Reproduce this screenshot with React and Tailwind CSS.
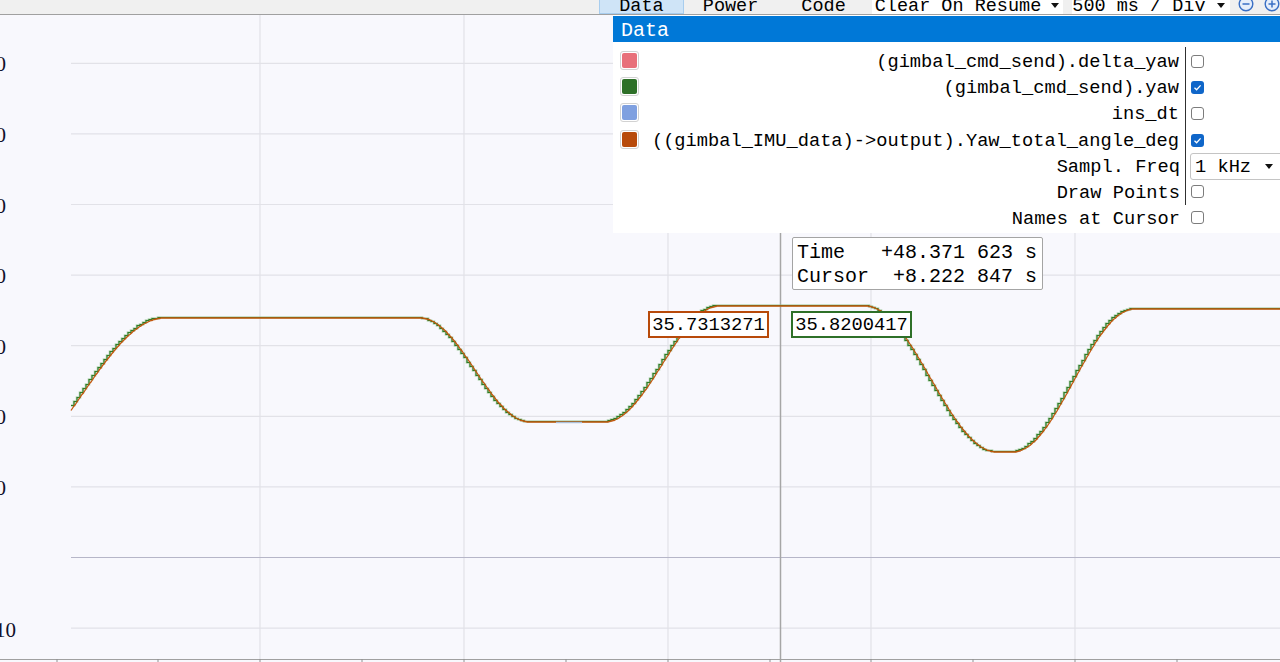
import { useMemo } from 'react'

const SEGS = [
  [0, 470, 165, 318],
  [420, 318, 530, 422],
  [605, 422, 720, 306],
  [865, 306, 997, 452],
  [1013, 452, 1135, 309],
]

function yaw(x) {
  let y = SEGS[0][1]
  for (const [x0, y0, x1, y1] of SEGS) {
    if (x < x0) return y
    if (x <= x1) {
      const t = (x - x0) / (x1 - x0)
      return y0 + ((y1 - y0) * (1 - Math.cos(Math.PI * t))) / 2
    }
    y = y1
  }
  return y
}

const GRID_Y = [63.3, 133.9, 204.5, 275.1, 345.7, 416.3, 486.9, 628.1]
const GRID_X = [260, 464, 668, 871, 1075]
const TICKS = [57, 158, 260, 362, 464, 566, 668, 770, 871, 973, 1075, 1177]

const rows = [
  { color: '#e8707a', label: '(gimbal_cmd_send).delta_yaw', checked: false },
  { color: '#2e7028', label: '(gimbal_cmd_send).yaw', checked: true },
  { color: '#7fa0e0', label: 'ins_dt', checked: false },
  { color: '#b84a0a', label: '((gimbal_IMU_data)->output).Yaw_total_angle_deg', checked: true },
]

function Checkbox({ checked }) {
  if (checked) {
    return (
      <span className="grid size-[13px] place-items-center rounded-[3px] bg-[#0f66c9]">
        <svg width="9" height="9" viewBox="0 0 9 9">
          <path d="M1.5 4.8 L3.6 6.8 L7.6 2.4" fill="none" stroke="white" strokeWidth="1.3" />
        </svg>
      </span>
    )
  }
  return <span className="block size-[13px] rounded-[3px] border border-[#7c7c7c] bg-white" />
}

function Caret() {
  return (
    <svg width="8" height="5" viewBox="0 0 8 5">
      <path d="M0 0 H8 L4 5 Z" fill="#111" />
    </svg>
  )
}

function ZoomIcon({ plus }) {
  return (
    <svg width="16" height="16" viewBox="0 0 16 16" className="-mt-[4px]">
      <circle cx="8" cy="8" r="6.8" fill="#e6eefa" stroke="#3a6fc4" strokeWidth="1.4" />
      <path d="M4.5 8 H11.5" stroke="#3a6fc4" strokeWidth="1.5" />
      {plus ? <path d="M8 4.5 V11.5" stroke="#3a6fc4" strokeWidth="1.5" /> : null}
    </svg>
  )
}

function Plot() {
  const orange = useMemo(() => {
    let d = `M71 ${yaw(71).toFixed(1)}`
    for (let x = 72; x <= 1280; x++) d += ` L${x} ${(Math.round(yaw(x) * 2) / 2).toFixed(1)}`
    return d
  }, [])

  // sampled channel: stair steps, a few pixels ahead of the angle
  const green = useMemo(() => {
    const g = (x) => Math.round(yaw(x + 3)) - 0.5
    let d = `M71 ${g(71)}`
    for (let x = 71; x < 1280; x += 3) d += ` H${x + 3} V${g(x + 3)}`
    return d
  }, [])

  return (
    <svg width="1280" height="647" className="block">
      <g transform="translate(0 -15)">
        {GRID_Y.map((y) => (
          <line key={y} x1="71" x2="1280" y1={y} y2={y} stroke="#e2e2e8" strokeWidth="1.2" />
        ))}
        {GRID_X.map((x) => (
          <line key={x} x1={x} x2={x} y1="15" y2="659" stroke="#e2e2e8" strokeWidth="1.2" />
        ))}
        <line x1="71" x2="1280" y1="557.5" y2="557.5" stroke="#b6b6c8" strokeWidth="1.2" />
        <line x1="780.5" x2="780.5" y1="15" y2="662" stroke="#a6a6a6" strokeWidth="1.5" />
        <line x1="0" x2="1280" y1="659.5" y2="659.5" stroke="#a0a0a0" strokeWidth="1" />
        {TICKS.map((x) => (
          <line key={x} x1={x} x2={x} y1="659" y2="662" stroke="#909090" strokeWidth="1" />
        ))}

        <g fontFamily="'Liberation Serif', serif" fontSize="21" fill="#10102a">
          {['70', '60', '50', '40', '30', '20', '10'].map((t, i) => (
            <text key={t} x="6" y={GRID_Y[i] + 8} textAnchor="end">
              {t}
            </text>
          ))}
          <text x="16" y="637" textAnchor="end">
            -10
          </text>
        </g>

        <path d={green} fill="none" stroke="#8fbf8a" strokeWidth="2.6" opacity="0.6" />
        <path d={green} fill="none" stroke="#2f7b26" strokeWidth="1.2" />
        <path d={orange} fill="none" stroke="#c4550c" strokeWidth="1.3" />
        <line x1="556" x2="582" y1="422.5" y2="422.5" stroke="#a9bfd9" strokeWidth="1.4" />
      </g>
    </svg>
  )
}

export default function App() {
  return (
    <div className="h-[662px] w-[1280px] overflow-hidden bg-[#f8f8fd] font-['Liberation_Mono',monospace] text-black">
      {/* Toolbar, cut off at the top */}
      <div className="flex h-[15px] items-start overflow-hidden border-b border-[#a0a0a0] bg-[#f0f0f0] pl-[599px] text-[18.5px] leading-[14px]">
        <div className="h-[14px] w-[85px] border border-t-0 border-[#a8cdee] bg-[#cfe4f7] text-center">Data</div>
        <div className="ml-[19px]">Power</div>
        <div className="ml-[43px]">Code</div>
        <div className="ml-[26px] flex h-[14px] w-[192px] items-start justify-between bg-white pl-[3px] pr-[4px]">
          <span>Clear On Resume</span>
          <span className="pt-[3px]">
            <Caret />
          </span>
        </div>
        <div className="ml-[9px] flex h-[14px] w-[158px] items-start justify-between bg-white pr-[5px]">
          <span>500 ms / Div</span>
          <span className="pt-[3px]">
            <Caret />
          </span>
        </div>
        <div className="ml-[8px]">
          <ZoomIcon />
        </div>
        <div className="ml-[10px]">
          <ZoomIcon plus />
        </div>
      </div>

      <div className="relative h-[647px]">
        <Plot />

        {/* Data legend panel */}
        <div className="absolute left-[613px] right-0 top-0 h-[218px] overflow-hidden bg-white pt-[1px] text-[18.7px]">
          <div className="h-[26px] bg-[#0078d7] pl-[8px] pt-[2px] text-[20px] leading-[26px] text-white">Data</div>
          <div className="mt-[5px]">
            {rows.map((row) => (
              <div key={row.label} className="flex h-[26.3px] items-center">
                <div className="w-[38px] shrink-0 pl-[7px]">
                  <div className="size-[19px] rounded-[3px] border border-[#d2d2d2] bg-white p-[1px]">
                    <div className="size-full rounded-[2px]" style={{ background: row.color }} />
                  </div>
                </div>
                <div className="flex min-w-0 flex-1 justify-end whitespace-pre pr-[1px] pt-[3px] leading-[26px]">
                  <span>{row.label}</span>
                </div>
                <div className="h-full w-[5px] shrink-0" />
                <div className="flex h-full w-[95px] shrink-0 items-center border-l border-[#303030] pl-[5px] pt-[2px]">
                  <Checkbox checked={row.checked} />
                </div>
              </div>
            ))}
            <div className="flex h-[26.3px] items-center">
              <div className="flex-1 pt-[3px] text-right leading-[26px]">Sampl. Freq</div>
              <div className="h-full w-[5px] shrink-0" />
              <div className="flex h-full w-[95px] shrink-0 items-center border-l border-[#303030] pl-[4px]">
                <div className="mt-[2px] flex h-[27px] w-[96px] shrink-0 items-center justify-between rounded-[3px] border border-[#c4c4c4] bg-white pl-[4px] pr-[12px] pt-[1px] leading-[24px]">
                  <span>1 kHz</span>
                  <Caret />
                </div>
              </div>
            </div>
            <div className="flex h-[26.3px] items-center">
              <div className="flex-1 pt-[3px] text-right leading-[26px]">Draw Points</div>
              <div className="h-full w-[5px] shrink-0" />
              <div className="flex h-full w-[95px] shrink-0 items-center border-l border-[#303030] pl-[5px]">
                <Checkbox checked={false} />
              </div>
            </div>
            <div className="flex h-[26.3px] items-center">
              <div className="flex-1 pt-[3px] text-right leading-[26px]">Names at Cursor</div>
              <div className="h-full w-[5px] shrink-0" />
              <div className="flex h-full w-[95px] shrink-0 items-center border-l border-transparent pl-[5px]">
                <Checkbox checked={false} />
              </div>
            </div>
          </div>
        </div>

        {/* Cursor readout */}
        <div className="absolute left-[792px] top-[222px] h-[53px] w-[251px] rounded-[2px] border border-[#a4a4a4] bg-white pl-[4px] pt-[3px] text-[20px] leading-[24px] whitespace-pre">
          <div>Time   +48.371 623 s</div>
          <div>Cursor  +8.222 847 s</div>
        </div>

        {/* Values at cursor */}
        <div className="absolute left-[648px] top-[296px] flex h-[27px] w-[121px] items-center justify-center border-2 border-[#b84a0a] bg-white pt-[1px] text-[18.8px]">
          35.7313271
        </div>
        <div className="absolute left-[791px] top-[296px] flex h-[27px] w-[121px] items-center justify-center border-2 border-[#2e7028] bg-white pt-[1px] text-[18.8px]">
          35.8200417
        </div>
      </div>
    </div>
  )
}
